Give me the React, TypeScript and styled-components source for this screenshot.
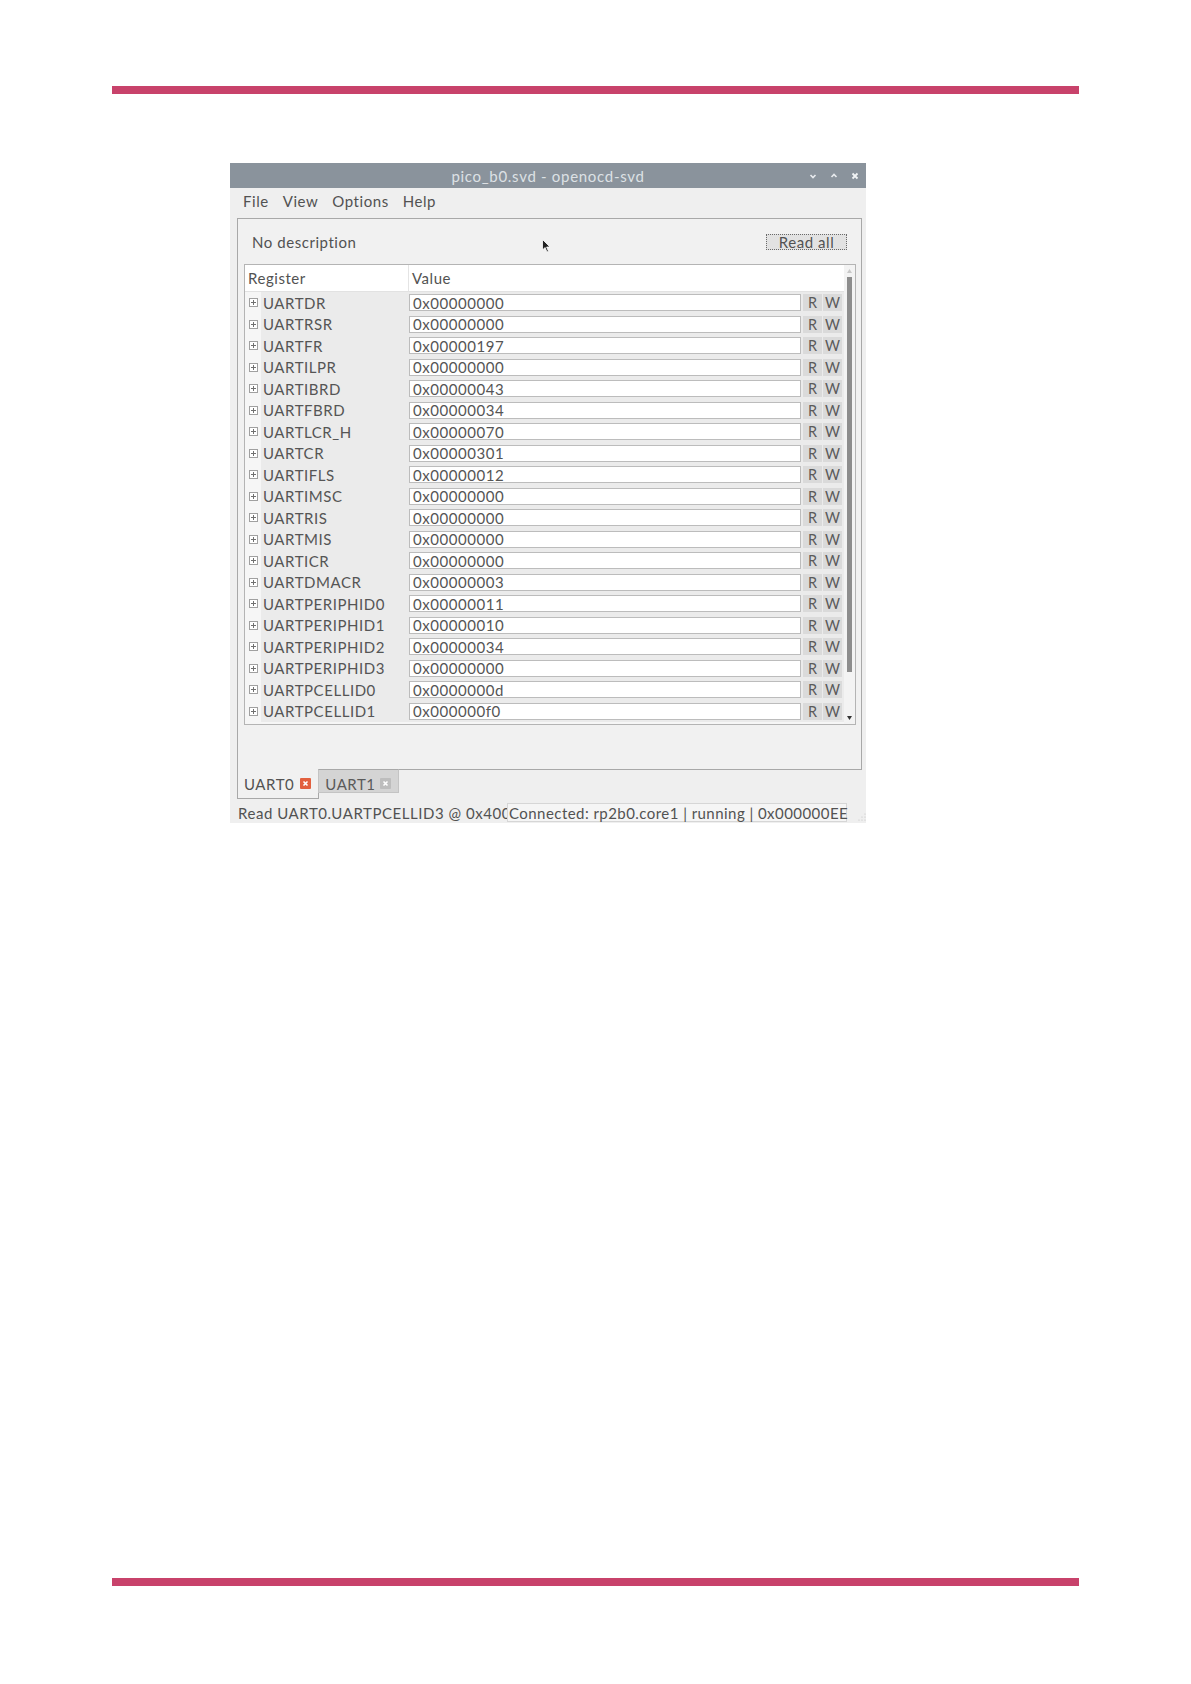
import React from "react";
import styled, { createGlobalStyle } from "styled-components";

const Global = createGlobalStyle`
  html, body { margin: 0; padding: 0; background: #ffffff; }
  body { font-family: Lato, "Noto Sans", "Liberation Sans", sans-serif; }
`;

const Page = styled.div`
  width: 1191px;
  height: 1684px;
  padding-top: 86px;
  box-sizing: border-box;
  position: relative;
`;

const RedBar = styled.div<{ $top: number }>`
  margin: ${(p) => p.$top}px 0 0 112px;
  width: 967px;
  height: 8px;
  background: #c8426b;
`;

const Window = styled.div`
  margin: 69px 0 0 230px;
  width: 636px;
  height: 660px;
  background: #efefef;
  display: flex;
  flex-direction: column;
  position: relative;
  color: #525252;
  font-size: 15px;
  letter-spacing: 0.55px;
`;

const TitleBar = styled.div`
  height: 25px;
  background: #8a939c;
  display: flex;
  align-items: center;
  justify-content: center;
  position: relative;
  color: #dde1e5;
  font-size: 15px;
  letter-spacing: 0.7px;
`;

const TitleButtons = styled.div`
  position: absolute;
  right: 5px;
  top: 0;
  height: 25px;
  display: flex;
  align-items: center;
  gap: 9px;
`;

const TitleBtn = styled.svg`
  width: 12px;
  height: 12px;
  display: block;
`;

const MenuBar = styled.div`
  height: 26px;
  display: flex;
  align-items: center;
  padding-left: 13px;
  gap: 14px;
`;

const MenuItem = styled.span`
  color: #525252;
`;

const Body = styled.div`
  flex: 1;
  display: flex;
  flex-direction: column;
  padding: 4px 4px 0 7px;
`;

const Frame = styled.div`
  height: 552px;
  box-sizing: border-box;
  border: 1px solid #a8a8a8;
  background: #f1f1f1;
  display: flex;
  flex-direction: column;
`;

const TopRow = styled.div`
  height: 45px;
  display: flex;
  align-items: center;
  justify-content: space-between;
  padding: 0 14px 0 14px;
`;

const ReadAll = styled.button`
  font: inherit;
  font-size: 15px;
  letter-spacing: 0.55px;
  color: #525252;
  width: 81px;
  height: 16px;
  padding: 0;
  line-height: 14px;
  background: #e2e2e2;
  border: 1px dotted #6a6a6a;
  box-sizing: border-box;
  display: flex;
  align-items: center;
  justify-content: center;
`;

const Table = styled.div`
  margin: 0 5px 0 6px;
  height: 461px;
  box-sizing: border-box;
  border: 1px solid #b4b4b4;
  background: #ffffff;
  display: flex;
`;

const TableContent = styled.div`
  flex: 1;
  display: flex;
  flex-direction: column;
  background: #f6f6f6;
`;

const HeaderRow = styled.div`
  height: 26px;
  flex-shrink: 0;
  display: grid;
  grid-template-columns: 164px 1fr;
  border-bottom: 1px solid #e2e2e2;
  background: #ffffff;
`;

const HeaderCell = styled.div<{ $sep?: boolean }>`
  display: flex;
  align-items: center;
  padding-left: 3px;
  border-right: ${(p) => (p.$sep ? "1px solid #e4e4e4" : "none")};
  color: #525252;
`;

const Row = styled.div`
  height: 21.5px;
  flex-shrink: 0;
  display: grid;
  grid-template-columns: 16px 148px 1fr 20px 20px;
  align-items: center;
  background: #ebebeb;
  padding-right: 2px;
`;

const Expander = styled.div`
  height: 100%;
  background: #f6f6f6;
  display: flex;
  align-items: center;
  justify-content: center;
`;

const PlusBox = styled.svg`
  width: 9px;
  height: 9px;
  display: block;
`;

const RegName = styled.div`
  padding-left: 2px;
  color: #555;
  white-space: nowrap;
`;

const ValueInput = styled.div`
  height: 17px;
  box-sizing: border-box;
  border: 1px solid #bcbcbc;
  background: #ffffff;
  padding-left: 3px;
  display: flex;
  align-items: center;
  color: #555;
  margin-right: 1px;
`;

const RWButton = styled.div`
  height: 17px;
  background: #dadada;
  color: #5a5a5a;
  display: flex;
  align-items: center;
  justify-content: center;
  font-size: 14.5px;
  letter-spacing: 0;
  margin-left: 1px;
`;

const Scrollbar = styled.div`
  width: 11px;
  flex-shrink: 0;
  background: #f3f3f3;
  display: flex;
  flex-direction: column;
  align-items: center;
  padding-top: 4px;
  box-sizing: border-box;
`;

const Arrow = styled.svg<{ $bottom?: boolean }>`
  width: 5px;
  height: 4px;
  display: block;
  margin-bottom: ${(p) => (p.$bottom ? 4 : 0)}px;
`;

const Thumb = styled.div`
  width: 5px;
  height: 395px;
  background: #8d8d8d;
  margin-top: 4px;
`;

const Spacer = styled.div`
  flex: 1;
`;

const Tabs = styled.div`
  display: flex;
  align-items: flex-start;
  height: 30px;
  margin-top: -1px;
`;

const Tab = styled.div<{ $active?: boolean }>`
  height: ${(p) => (p.$active ? 30 : 24)}px;
  box-sizing: border-box;
  padding: ${(p) => (p.$active ? "0 7px 0 6px" : "5px 7px 0 6px")};
  display: flex;
  align-items: center;
  gap: ${(p) => (p.$active ? 6 : 4)}px;
  background: ${(p) => (p.$active ? "#f1f1f1" : "#d4d4d4")};
  border: 1px solid ${(p) => (p.$active ? "#a8a8a8" : "#c4c4c4")};
  border-top: ${(p) => (p.$active ? "none" : "1px solid #a8a8a8")};
  color: ${(p) => (p.$active ? "#525252" : "#5a5a5a")};
  margin-left: ${(p) => (p.$active ? 0 : -1)}px;
`;

const CloseIcon = styled.svg`
  width: 11px;
  height: 11px;
  display: block;
`;

const StatusBar = styled.div`
  height: 22px;
  display: flex;
  align-items: flex-end;
  padding: 0 0 1px 8px;
  margin-top: -3px;
`;

const StatusMsg = styled.div`
  width: 269px;
  height: 19px;
  display: flex;
  align-items: center;
  overflow: hidden;
  white-space: nowrap;
  color: #525252;
`;

const StatusBox = styled.div`
  width: 340px;
  height: 19px;
  box-sizing: border-box;
  border: 1px solid #d6d6d6;
  background: #f5f5f5;
  padding-left: 1px;
  display: flex;
  align-items: center;
  white-space: nowrap;
  color: #525252;
  letter-spacing: 0.45px;
`;

const Grip = styled.svg`
  width: 8px;
  height: 8px;
  margin: 0 0 1px 11px;
  display: block;
`;

const Cursor = styled.svg`
  position: absolute;
  left: 542px;
  top: 239px;
  width: 9px;
  height: 14px;
`;

const registers: [string, string][] = [
  ["UARTDR", "0x00000000"],
  ["UARTRSR", "0x00000000"],
  ["UARTFR", "0x00000197"],
  ["UARTILPR", "0x00000000"],
  ["UARTIBRD", "0x00000043"],
  ["UARTFBRD", "0x00000034"],
  ["UARTLCR_H", "0x00000070"],
  ["UARTCR", "0x00000301"],
  ["UARTIFLS", "0x00000012"],
  ["UARTIMSC", "0x00000000"],
  ["UARTRIS", "0x00000000"],
  ["UARTMIS", "0x00000000"],
  ["UARTICR", "0x00000000"],
  ["UARTDMACR", "0x00000003"],
  ["UARTPERIPHID0", "0x00000011"],
  ["UARTPERIPHID1", "0x00000010"],
  ["UARTPERIPHID2", "0x00000034"],
  ["UARTPERIPHID3", "0x00000000"],
  ["UARTPCELLID0", "0x0000000d"],
  ["UARTPCELLID1", "0x000000f0"],
];

const Plus = () => (
  <PlusBox viewBox="0 0 9 9">
    <rect x="0.5" y="0.5" width="8" height="8" fill="#fff" stroke="#a0a0a0" />
    <path d="M2 4.5h5M4.5 2v5" stroke="#707070" strokeWidth="1" />
  </PlusBox>
);

const Close = ({ color }: { color: string }) => (
  <CloseIcon viewBox="0 0 11 11">
    <rect x="0" y="0" width="11" height="11" rx="1" fill={color} />
    <path d="M3.5 3.5l4 4M7.5 3.5l-4 4" stroke="#fff" strokeWidth="1.6" />
  </CloseIcon>
);

export default function App() {
  return (
    <Page>
      <Global />
      <RedBar $top={0} />
      <Window>
        <TitleBar>
          pico_b0.svd - openocd-svd
          <TitleButtons>
            <TitleBtn viewBox="0 0 12 12">
              <path d="M3.5 5l2.5 2.5L8.5 5" fill="none" stroke="#e8ebee" strokeWidth="1.6" />
            </TitleBtn>
            <TitleBtn viewBox="0 0 12 12">
              <path d="M3.5 7l2.5-2.5L8.5 7" fill="none" stroke="#e8ebee" strokeWidth="1.6" />
            </TitleBtn>
            <TitleBtn viewBox="0 0 12 12">
              <path d="M3.5 3.5l5 5M8.5 3.5l-5 5" fill="none" stroke="#f2f4f6" strokeWidth="1.8" />
            </TitleBtn>
          </TitleButtons>
        </TitleBar>
        <MenuBar>
          <MenuItem>File</MenuItem>
          <MenuItem>View</MenuItem>
          <MenuItem>Options</MenuItem>
          <MenuItem>Help</MenuItem>
        </MenuBar>
        <Body>
          <Frame>
            <TopRow>
              <span>No description</span>
              <ReadAll>Read all</ReadAll>
            </TopRow>
            <Table>
              <TableContent>
                <HeaderRow>
                  <HeaderCell $sep>Register</HeaderCell>
                  <HeaderCell>Value</HeaderCell>
                </HeaderRow>
                {registers.map(([name, val]) => (
                  <Row key={name}>
                    <Expander>
                      <Plus />
                    </Expander>
                    <RegName>{name}</RegName>
                    <ValueInput>{val}</ValueInput>
                    <RWButton>R</RWButton>
                    <RWButton>W</RWButton>
                  </Row>
                ))}
              </TableContent>
              <Scrollbar>
                <Arrow viewBox="0 0 5 4">
                  <path d="M0 4L2.5 0L5 4Z" fill="#c8c8c8" />
                </Arrow>
                <Thumb />
                <Spacer />
                <Arrow viewBox="0 0 5 4" $bottom>
                  <path d="M0 0L2.5 4L5 0Z" fill="#333" />
                </Arrow>
              </Scrollbar>
            </Table>
          </Frame>
          <Tabs>
            <Tab $active>
              UART0
              <Close color="#e2603f" />
            </Tab>
            <Tab>
              UART1
              <Close color="#bdbdbd" />
            </Tab>
          </Tabs>
        </Body>
        <StatusBar>
          <StatusMsg>Read UART0.UARTPCELLID3 @ 0x40000000</StatusMsg>
          <StatusBox>Connected: rp2b0.core1 | running | 0x000000EE</StatusBox>
          <Grip viewBox="0 0 8 8">
            <circle cx="7" cy="1" r="0.6" fill="#c0c0c0" />
            <circle cx="4" cy="4" r="0.6" fill="#c0c0c0" />
            <circle cx="7" cy="4" r="0.6" fill="#c0c0c0" />
            <circle cx="1" cy="7" r="0.6" fill="#c0c0c0" />
            <circle cx="4" cy="7" r="0.6" fill="#c0c0c0" />
            <circle cx="7" cy="7" r="0.6" fill="#c0c0c0" />
          </Grip>
        </StatusBar>
      </Window>
      <RedBar $top={755} />
      <Cursor viewBox="0 0 9 14">
        <path d="M0.5 0.5L0.5 11L3 8.5L5 13L6.5 12.3L4.6 8L8 8Z" fill="#222" stroke="#fff" strokeWidth="0.8" />
      </Cursor>
    </Page>
  );
}
